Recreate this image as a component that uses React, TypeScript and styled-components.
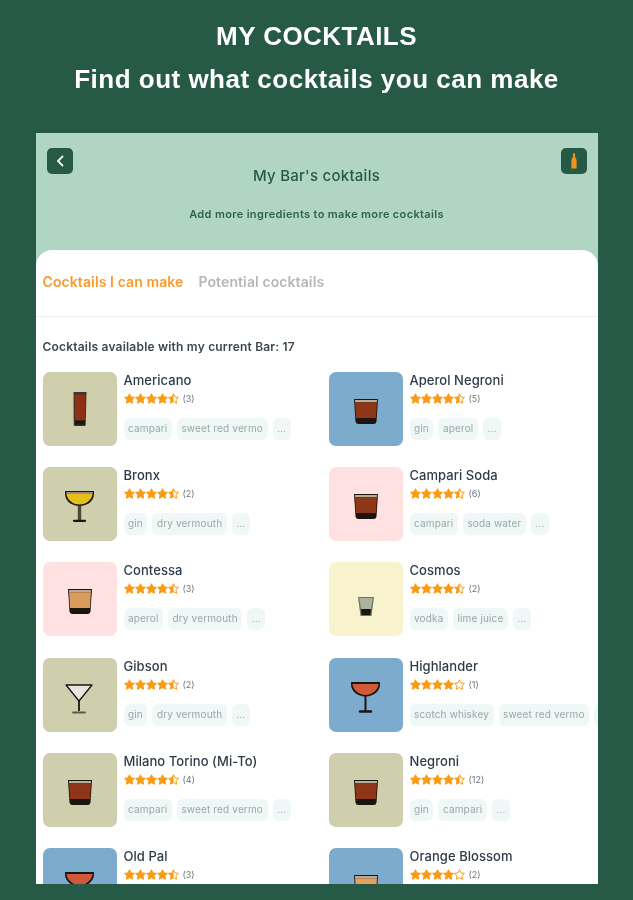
import React from 'react';
import styled, { createGlobalStyle } from 'styled-components';

type GlassKind = 'highball' | 'rocks' | 'coupe' | 'martini' | 'margarita' | 'shot';

interface Cocktail {
  name: string;
  rating: number;
  count: number;
  bg: string;
  glass: GlassKind;
  liquid: string;
  tags: string[];
}

const OLIVE = '#cfcfae';
const BLUE = '#7dabcd';
const PINK = '#ffe1e1';
const CREAM = '#f8f3cd';

const cocktails: Cocktail[] = [
  { name: 'Americano', rating: 4.5, count: 3, bg: OLIVE, glass: 'highball', liquid: '#8f2f17', tags: ['campari', 'sweet red vermo', '...'] },
  { name: 'Aperol Negroni', rating: 4.5, count: 5, bg: BLUE, glass: 'rocks', liquid: '#8f3518', tags: ['gin', 'aperol', '...'] },
  { name: 'Bronx', rating: 4.5, count: 2, bg: OLIVE, glass: 'coupe', liquid: '#e6bf1d', tags: ['gin', 'dry vermouth', '...'] },
  { name: 'Campari Soda', rating: 4.5, count: 6, bg: PINK, glass: 'rocks', liquid: '#8f3518', tags: ['campari', 'soda water', '...'] },
  { name: 'Contessa', rating: 4.5, count: 3, bg: PINK, glass: 'rocks', liquid: '#d99c5c', tags: ['aperol', 'dry vermouth', '...'] },
  { name: 'Cosmos', rating: 4.5, count: 2, bg: CREAM, glass: 'shot', liquid: '#a9b39c', tags: ['vodka', 'lime juice', '...'] },
  { name: 'Gibson', rating: 4.5, count: 2, bg: OLIVE, glass: 'martini', liquid: '#e9e6e0', tags: ['gin', 'dry vermouth', '...'] },
  { name: 'Highlander', rating: 4, count: 1, bg: BLUE, glass: 'margarita', liquid: '#d2583a', tags: ['scotch whiskey', 'sweet red vermo', '...'] },
  { name: 'Milano Torino (Mi-To)', rating: 4.5, count: 4, bg: OLIVE, glass: 'rocks', liquid: '#8f3518', tags: ['campari', 'sweet red vermo', '...'] },
  { name: 'Negroni', rating: 4.5, count: 12, bg: OLIVE, glass: 'rocks', liquid: '#8f3518', tags: ['gin', 'campari', '...'] },
  { name: 'Old Pal', rating: 4.5, count: 3, bg: BLUE, glass: 'margarita', liquid: '#d2583a', tags: ['campari', 'dry vermouth', '...'] },
  { name: 'Orange Blossom', rating: 4, count: 2, bg: BLUE, glass: 'rocks', liquid: '#e0a262', tags: ['gin', 'orange juice', '...'] },
];

const GlobalStyle = createGlobalStyle`
  html, body {
    margin: 0;
    height: 900px;
    overflow: hidden;
    background: #275a46;
    font-family: Inter, "Liberation Sans", sans-serif;
  }
`;

const Glass: React.FC<{ kind: GlassKind; liquid: string }> = ({ kind, liquid }) => {
  const ink = '#1b1512';
  if (kind === 'highball') {
    return (
      <svg width="74" height="74" viewBox="0 0 74 74">
        <path d="M30.500 20h13l-.8 33q0 1-1 1h-10q-1 0-1-1z" fill="#3d362b" />
        <path d="M31.600 22.500h10.800l-.5 26h-9.800z" fill={liquid} />
        <path d="M32 48.500h10l-.2 4.300h-9.600z" fill={ink} />
      </svg>
    );
  }
  if (kind === 'rocks') {
    return (
      <svg width="74" height="74" viewBox="0 0 74 74">
        <path d="M25 27h24l-1.500 22.500q-.3 2.500-3 2.500H29.500q-2.700 0-3-2.500z" fill={ink} />
        <path d="M26 28h22l-.1 2.200H26.100z" fill="#b9ad9a" />
        <path d="M26.100 30.200h21.800L47 46H27z" fill={liquid} />
      </svg>
    );
  }
  if (kind === 'shot') {
    return (
      <svg width="74" height="74" viewBox="0 0 74 74">
        <path d="M29 35h16l-2.500 19h-11z" fill="#6d7565" />
        <path d="M30.300 36h13.400L42 47H32z" fill={liquid} />
        <path d="M32 47h10l-.6 6h-8.800z" fill={ink} />
      </svg>
    );
  }
  if (kind === 'martini') {
    return (
      <svg width="74" height="74" viewBox="0 0 74 74">
        <path d="M23 27h26L36 43z" fill={liquid} stroke={ink} strokeWidth="1.300" strokeLinejoin="round" />
        <path d="M36 43v10" stroke={ink} strokeWidth="1.800" />
        <path d="M30 54.500h12" stroke="#5f5a48" strokeWidth="1.800" strokeLinecap="round" />
      </svg>
    );
  }
  if (kind === 'coupe') {
    return (
      <svg width="74" height="74" viewBox="0 0 74 74">
        <path d="M22 24h29v3c0 7-6.500 12-14.500 12S22 34 22 27z" fill={ink} />
        <path d="M23.300 25.200h26.400v1.600H23.300z" fill="#b9ad9a" />
        <path d="M23.500 27h26c-.5 5.500-6 10.500-13 10.500S24 32.500 23.500 27z" fill={liquid} />
        <path d="M34.800 39h3.400v14h-3.400z" fill="#4a493c" />
        <path d="M31 53.800h11" stroke={ink} strokeWidth="2.200" strokeLinecap="round" />
      </svg>
    );
  }
  return (
    <svg width="74" height="74" viewBox="0 0 74 74">
      <path d="M22 24h29v2.500c0 6.500-6.500 12-14.500 12S22 33 22 26.500z" fill={ink} />
      <path d="M23.500 26h26c-.3 5.500-6 11-13 11s-12.700-5.500-13-11z" fill={liquid} />
      <path d="M36.500 38v15" stroke={ink} strokeWidth="2" />
      <path d="M31 53.500h11" stroke={ink} strokeWidth="2.400" strokeLinecap="round" />
    </svg>
  );
};

const STAR = 'M12 2.500l3 6.300 6.900 1-5 4.800 1.200 6.900-6.100-3.300-6.100 3.300 1.200-6.900-5-4.800 6.900-1z';
const HALF = 'M12 2.500l-3 6.300-6.900 1 5 4.800-1.200 6.900 6.100-3.300z';

const Star: React.FC<{ fill: 'full' | 'half' | 'empty' }> = ({ fill }) => (
  <svg width="11" height="11" viewBox="1 1 22 22">
    <path d={STAR} fill={fill === 'full' ? '#fb9a12' : 'none'} stroke="#fb9a12" strokeWidth="2" strokeLinejoin="round" />
    {fill === 'half' && <path d={HALF} fill="#fb9a12" />}
  </svg>
);

const Rating: React.FC<{ value: number; count: number }> = ({ value, count }) => (
  <RatingRow>
    {[1, 2, 3, 4, 5].map((n) => (
      <Star key={n} fill={value >= n ? 'full' : value >= n - 0.5 ? 'half' : 'empty'} />
    ))}
    <RatingCount>({count})</RatingCount>
  </RatingRow>
);

const App: React.FC = () => (
  <>
    <GlobalStyle />
    <Page>
      <Heading>MY COCKTAILS</Heading>
      <Subheading>Find out what cocktails you can make</Subheading>
      <Panel>
        <TopArea>
          <TopBar>
            <IconButton aria-label="Back">
              <svg width="14" height="14" viewBox="0 0 14 14" fill="none">
                <path d="M9.500 2.500L5 7l4.500 4.500" stroke="#e6f0ea" strokeWidth="2" strokeLinecap="round" strokeLinejoin="round" />
              </svg>
            </IconButton>
            <IconButton aria-label="My bar">
              <svg width="8" height="18" viewBox="0 0 8 18">
                <path d="M2.900 1.500h2.200v3.500L6.600 8V16.500H1.400V8l1.500-3z" fill="#f2951c" />
              </svg>
            </IconButton>
          </TopBar>
          <ScreenTitle>My Bar's coktails</ScreenTitle>
          <ScreenHint>Add more ingredients to make more cocktails</ScreenHint>
        </TopArea>
        <Sheet>
          <Tabs>
            <Tab active>Cocktails I can make</Tab>
            <Tab>Potential cocktails</Tab>
          </Tabs>
          <Available>Cocktails available with my current Bar: 17</Available>
          <Grid>
            {cocktails.map((c) => (
              <Card key={c.name}>
                <Thumb bg={c.bg}>
                  <Glass kind={c.glass} liquid={c.liquid} />
                </Thumb>
                <Info>
                  <Name>{c.name}</Name>
                  <Rating value={c.rating} count={c.count} />
                  <TagRow>
                    {c.tags.map((t) => (
                      <Tag key={t}>{t}</Tag>
                    ))}
                  </TagRow>
                </Info>
              </Card>
            ))}
          </Grid>
        </Sheet>
      </Panel>
    </Page>
  </>
);

export default App;

const Page = styled.div`
  display: flex;
  flex-direction: column;
  align-items: center;
  height: 900px;
  padding-top: 21px;
  box-sizing: border-box;
  filter: blur(0.45px);
`;

const Heading = styled.h1`
  margin: 0;
  font-family: "Liberation Sans", sans-serif;
  font-size: 26px;
  line-height: 30px;
  font-weight: 700;
  letter-spacing: 0.45px;
  color: #fff;
`;

const Subheading = styled.h2`
  margin: 13px 0 0;
  font-family: "Liberation Sans", sans-serif;
  font-size: 26px;
  line-height: 30px;
  font-weight: 700;
  letter-spacing: 0.5px;
  color: #fff;
`;

const Panel = styled.main`
  width: 562px;
  height: 751px;
  margin-top: 39px;
  overflow: hidden;
  background: #b0d5c3;
  flex-shrink: 0;
`;

const TopArea = styled.header`
  display: flex;
  flex-direction: column;
  align-items: center;
  height: 117px;
  padding: 15px 11px 0;
  box-sizing: border-box;
`;

const TopBar = styled.div`
  display: flex;
  justify-content: space-between;
  align-self: stretch;
  height: 26px;
`;

const IconButton = styled.button`
  display: flex;
  align-items: center;
  justify-content: center;
  width: 26px;
  height: 26px;
  padding: 0;
  border: 0;
  border-radius: 5px;
  background: #275a46;
`;

const ScreenTitle = styled.div`
  margin-top: -8px;
  font-size: 15px;
  line-height: 20px;
  font-weight: 500;
  letter-spacing: 0.25px;
  color: #27594a;
`;

const ScreenHint = styled.div`
  margin-top: 21px;
  font-size: 11px;
  line-height: 14px;
  font-weight: 600;
  letter-spacing: 0.35px;
  color: #2f6350;
`;

const Sheet = styled.section`
  background: #fff;
  border-radius: 16px 16px 0 0;
  height: 634px;
`;

const Tabs = styled.div`
  display: flex;
  align-items: center;
  gap: 15px;
  height: 67px;
  padding: 0 7px 3px;
  box-sizing: border-box;
  border-bottom: 1px solid #ebeeee;
  margin-bottom: 22px;
`;

const Tab = styled.div<{ active?: boolean }>`
  font-size: 14px;
  font-weight: 600;
  letter-spacing: 0.1px;
  color: ${({ active }) => (active ? '#fb9a2b' : '#b5b7b7')};
`;

const Available = styled.div`
  padding-left: 7px;
  font-size: 12px;
  line-height: 16px;
  font-weight: 600;
  letter-spacing: 0.2px;
  color: #3c4850;
  margin-bottom: 17px;
`;

const Grid = styled.div`
  display: grid;
  grid-template-columns: 286px 269px;
  row-gap: 21.200px;
  padding-left: 7px;
`;

const Card = styled.article`
  display: flex;
  gap: 7px;
  min-width: 0;
`;

const Thumb = styled.div<{ bg: string }>`
  flex: 0 0 74px;
  width: 74px;
  height: 74px;
  border-radius: 7px;
  background: ${({ bg }) => bg};
`;

const Info = styled.div`
  display: flex;
  flex-direction: column;
  min-width: 0;
`;

const Name = styled.div`
  font-size: 13px;
  line-height: 16px;
  font-weight: 500;
  letter-spacing: 0.05px;
  color: #2f3c48;
`;

const RatingRow = styled.div`
  display: flex;
  align-items: center;
  height: 11px;
  margin-top: 5px;
`;

const RatingCount = styled.span`
  margin-left: 4px;
  font-size: 9px;
  color: #6f7478;
`;

const TagRow = styled.div`
  display: flex;
  gap: 5px;
  margin-top: 14px;
  white-space: nowrap;
`;

const Tag = styled.span`
  flex-shrink: 0;
  padding: 0 4.500px;
  height: 22px;
  line-height: 21px;
  border-radius: 6px;
  font-size: 10px;
  letter-spacing: 0.15px;
  color: #98a8a4;
  background: #eff8f6;
`;
